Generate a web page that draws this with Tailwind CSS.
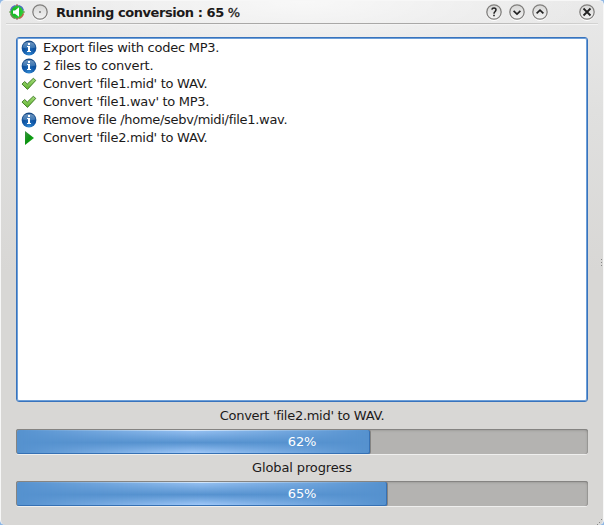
<!DOCTYPE html>
<html lang="en">
<head>
<meta charset="utf-8">
<title>Running conversion : 65 %</title>
<script src="https://cdn.jsdelivr.net/npm/@tailwindcss/browser@4"></script>
</head>
<body class="w-[604px] h-[525px] overflow-hidden bg-[#8fb7e4]">
<svg class="absolute size-0">
  <defs>
    <radialGradient id="blue" cx=".5" cy=".95" r=".9"><stop offset="0" stop-color="#2f86d0"/><stop offset=".5" stop-color="#0f55a5"/><stop offset="1" stop-color="#174a86"/></radialGradient>
    <linearGradient id="shine" x1="0" y1="0" x2="0" y2="1"><stop offset="0" stop-color="#a9c6e2"/><stop offset="1" stop-color="#4f88bf"/></linearGradient>
    <linearGradient id="leaf" x1="0" y1="0" x2="0" y2="1"><stop offset="0" stop-color="#a5dc7c"/><stop offset="1" stop-color="#5fb32f"/></linearGradient>
    <linearGradient id="play" x1="0" y1="0" x2="1" y2="1"><stop offset="0" stop-color="#3f9446"/><stop offset=".5" stop-color="#0a920f"/><stop offset="1" stop-color="#25c72c"/></linearGradient>
    <linearGradient id="btn" x1="0" y1="0" x2="0" y2="1"><stop offset="0" stop-color="#d6d6d5"/><stop offset="1" stop-color="#f4f4f4"/></linearGradient>
    <radialGradient id="green" cx=".35" cy=".5" r=".6"><stop offset="0" stop-color="#0cae1c"/><stop offset="1" stop-color="#2fd23a"/></radialGradient>
    <symbol id="info" viewBox="0 0 16 16">
      <circle cx="8" cy="8" r="7.4" fill="url(#blue)"/>
      <path d="M1.5 7.4a6.6 6.6 0 0 1 13 0Q8 9.4 1.5 7.4Z" fill="url(#shine)" opacity=".6"/>
      <path d="M7 3h2v2H7zM6 6h3v5h1v1H6v-1h1V7H6z" fill="#fff"/>
    </symbol>
    <symbol id="check" viewBox="0 0 16 16">
      <path d="M1 8.1 3.6 5.5 6.3 8 12.3 2.3l2.5 2.1-8.3 9z" fill="url(#leaf)" stroke="#39751f" stroke-width=".9" stroke-linejoin="round"/>
    </symbol>
    <symbol id="disc" viewBox="0 0 18 18">
      <circle cx="9" cy="9.8" r="7.7" fill="none" stroke="#fff" stroke-width="1"/>
      <circle cx="9" cy="9" r="7.2" fill="url(#btn)" stroke="#807f7d" stroke-width="1.3"/>
    </symbol>
  </defs>
</svg>
<main class="w-[604px] h-[525px] rounded-[5px] border-t border-x border-[#f7f7f7] bg-[radial-gradient(ellipse_300px_64px_at_50%_0,#ffffffb0,#ffffff00),linear-gradient(to_bottom,#e9e9e9_0px,#e0e0df_110px,#d8d7d5_270px)] font-['DejaVu_Sans',sans-serif] text-[13px] text-[#1c1a1a] relative">
  <header class="h-[22px] mx-[5px] flex items-center">
    <svg class="size-4 ml-[3px]" viewBox="0 0 16 16">
      <circle cx="8" cy="8" r="6.7" fill="url(#green)"/>
      <g fill="none" stroke-width="1.3">
        <path d="M1.6 6.5A6.6 6.6 0 0 1 6.5 1.6" stroke="#5a62c8"/><path d="M9.5 1.6a6.6 6.6 0 0 1 4.9 4.9" stroke="#4a6ac0"/><path d="M14.4 9.5a6.6 6.6 0 0 1-4.9 4.9" stroke="#c0604a"/><path d="M6.5 14.4a6.6 6.6 0 0 1-4.9-4.9" stroke="#6f8a50"/>
        <path d="M8 .3v1.8M8 13.9v1.8" stroke="#a04858"/><path d="M.3 8h1.8M13.9 8h1.8" stroke="#6a9a50"/>
      </g>
      <path d="M4 6.5h2L10 3.2v9.6L6 9.8H4z" fill="#fff"/>
    </svg>
    <svg class="size-[18px] ml-[5.5px]" viewBox="0 0 18 18"><use href="#disc"/><circle cx="9" cy="9" r=".8" fill="#333"/></svg>
    <h1 class="ml-[7.5px] font-bold whitespace-nowrap leading-[18px] mt-px tracking-[-0.43px]">Running conversion : 65 <span class="font-normal [-webkit-text-stroke:0.3px_#1c1a1a]">%</span></h1>
    <div class="ml-auto flex gap-[5px] mr-[2.5px]">
      <svg class="size-[18px]" viewBox="0 0 18 18"><use href="#disc"/><path d="M6.9 6.6Q7 5 9 5t2 1.8Q11 7.8 10 8.6 9 9.3 9 10.8" fill="none" stroke="#222" stroke-width="1.5"/><path d="M8.2 11.8h1.6v1.5H8.2z" fill="#222"/></svg>
      <svg class="size-[18px]" viewBox="0 0 18 18"><use href="#disc"/><path d="m5.6 7.8 3.4 3.2 3.4-3.2" fill="none" stroke="#222" stroke-width="1.7"/></svg>
      <svg class="size-[18px]" viewBox="0 0 18 18"><use href="#disc"/><path d="m5.6 10.4 3.4-3.2 3.4 3.2" fill="none" stroke="#222" stroke-width="1.7"/></svg>
      <svg class="size-[18px] ml-6" viewBox="0 0 18 18"><use href="#disc"/><path d="m5.5 5.5 7 7m0-7-7 7" fill="none" stroke="#222" stroke-width="1.8"/></svg>
    </div>
  </header>
  <div class="h-px mx-[5px] bg-[linear-gradient(to_right,#d4d4d3,#a9a8a7_30%,#a9a8a7_70%,#d4d4d3)]"></div>
  <div class="h-px mx-[5px] bg-[#f4f4f4]"></div>
  <ul class="mt-[12px] ml-[15px] w-[572px] h-[365px] rounded-[3px] border border-[#3873bd] bg-white pt-px pl-[4px] leading-[18px] whitespace-nowrap shadow-[inset_0_0_0_1px_#6d9fd8] tracking-[-0.29px]">
    <li class="flex h-[18px] items-center gap-[6px]"><svg class="size-4"><use href="#info"/></svg><span class="tracking-[-0.25px]">Export files with codec MP3.</span></li>
    <li class="flex h-[18px] items-center gap-[6px]"><svg class="size-4"><use href="#info"/></svg><span class="tracking-[-0.18px]">2 files to convert.</span></li>
    <li class="flex h-[18px] items-center gap-[6px]"><svg class="size-4"><use href="#check"/></svg>Convert 'file1.mid' to WAV.</li>
    <li class="flex h-[18px] items-center gap-[6px]"><svg class="size-4"><use href="#check"/></svg>Convert 'file1.wav' to MP3.</li>
    <li class="flex h-[18px] items-center gap-[6px]"><svg class="size-4"><use href="#info"/></svg><span class="tracking-[-0.3px]">Remove file /home/sebv/midi/file1.wav.</span></li>
    <li class="flex h-[18px] items-center gap-[6px]"><svg class="size-4" viewBox="0 0 16 16"><path d="M4 1v14L13 8z" fill="url(#play)"/></svg>Convert 'file2.mid' to WAV.</li>
  </ul>
  <section class="ml-[15px] w-[572px] text-center">
    <p class="h-[27px] leading-[27px] tracking-[-0.29px]">Convert 'file2.mid' to WAV.</p>
    <div class="relative h-[25px] rounded-[3px] bg-[#b4b3b1] shadow-[inset_0_1px_0_#858482,inset_-1px_0_0_#979694,inset_1px_0_0_#858482,inset_-1px_2px_2px_#a09f9d,0_1px_0_#efefee]">
      <div class="absolute left-px top-px h-6 w-[353px] rounded-[2px] border-b border-r border-[#3671b4] shadow-[1px_0_0_#858482] bg-[#5692cf] overflow-hidden">
        <div class="h-full border-t border-[#d2e6fb] bg-[linear-gradient(to_bottom,#94bff0,#5692cf_53%,#a0c8f8)] [mask-image:linear-gradient(to_right,transparent,black_50%,transparent)]"></div>
      </div>
      <span class="relative leading-[25px] text-white tracking-[-0.2px]">62%</span>
    </div>
    <p class="h-[27px] leading-[27px] tracking-[-0.13px]">Global progress</p>
    <div class="relative h-[25px] rounded-[3px] bg-[#b4b3b1] shadow-[inset_0_1px_0_#858482,inset_-1px_0_0_#979694,inset_1px_0_0_#858482,inset_-1px_2px_2px_#a09f9d,0_1px_0_#efefee]">
      <div class="absolute left-px top-px h-6 w-[370px] rounded-[2px] border-b border-r border-[#3671b4] shadow-[1px_0_0_#858482] bg-[#5692cf] overflow-hidden">
        <div class="h-full border-t border-[#d2e6fb] bg-[linear-gradient(to_bottom,#94bff0,#5692cf_53%,#a0c8f8)] [mask-image:linear-gradient(to_right,transparent,black_50%,transparent)]"></div>
      </div>
      <span class="relative leading-[25px] text-white tracking-[-0.2px]">65%</span>
    </div>
  </section>
  <svg class="absolute left-[600px] top-[258px] w-[2px] h-[8px]" viewBox="0 0 2 8"><path d="M0 0h1v1H0zM0 3h1v1H0zM0 6h1v1H0z" fill="#888"/></svg>
  <svg class="absolute right-0 bottom-0 w-[6px] h-[6px]" viewBox="0 0 6 6"><path d="M4 0h1v1H4zM2 3h1v1H2zM0 5h1v1H0z" fill="#888"/></svg>
</main>
</body>
</html>
